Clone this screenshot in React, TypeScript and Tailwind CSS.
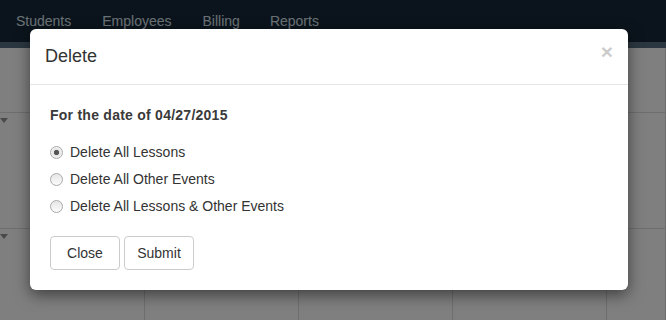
const navItems = ["Students", "Employees", "Billing", "Reports"];
const columns = [145, 154, 154, 154, 59];

const Caret = () => (
  <span className="block w-0 h-0 border-l-[4px] border-r-[4px] border-t-[5px] border-l-transparent border-r-transparent border-t-[#939393]" />
);

export default function App() {
  return (
    <div
      className="relative w-[666px] h-[320px] overflow-hidden bg-white"
      style={{ fontFamily: '"Liberation Sans", Arial, sans-serif' }}
    >
      {/* page behind the dialog */}
      <nav className="h-[42px] bg-[#172838] flex items-center pl-4 gap-[30px] text-[14px] text-[#d6e3ea]">
        <span>Students</span>
        <span className="ml-[1px]">Employees</span>
        <span className="ml-[1px]">Billing</span>
        <span>Reports</span>
      </nav>
      <div className="h-[6px] bg-[#566e80]" />
      <div className="flex">
        {columns.map((w, i) => (
          <div
            key={i}
            className="shrink-0 border-r border-[#dddddd]"
            style={{ width: w }}
          >
            <div className="h-[65px] border-b border-[#dddddd]" />
            <div className="h-[116px] border-b border-[#dddddd] pt-[5px]">
              {i === 0 && <Caret />}
            </div>
            <div className="h-[116px] pt-[5px]">{i === 0 && <Caret />}</div>
          </div>
        ))}
      </div>

      {/* overlay */}
      <div className="absolute inset-0 bg-black/50" />

      {/* dialog */}
      <div className="absolute left-[30px] top-[29px] w-[598px] bg-white rounded-[6px] shadow-[0_5px_15px_rgba(0,0,0,0.5)] text-[#333333]">
        <div className="h-[56px] border-b border-[#e5e5e5] flex items-center justify-between pl-[15px] pr-[15px]">
          <h4 className="text-[18px] leading-[26px] -mt-[2px]">Delete</h4>
          <button className="text-[21px] font-bold leading-none text-black opacity-20 -mt-[10px]">
            ×
          </button>
        </div>
        <div className="px-5 pt-5 pb-5">
          <p className="text-[14px] font-bold leading-5 text-[#3a3a3a] tracking-[0.25px]">
            For the date of 04/27/2015
          </p>
          <div className="mt-[17px] flex flex-col gap-[7px]">
            {[
              "Delete All Lessons",
              "Delete All Other Events",
              "Delete All Lessons & Other Events",
            ].map((label, i) => (
              <label key={label} className="flex items-center h-5 text-[14px]">
                <input
                  type="radio"
                  name="del"
                  defaultChecked={i === 0}
                  className="appearance-none w-[13px] h-[13px] m-0 mr-[7px] rounded-full border border-[#a9a9a9] bg-[linear-gradient(#e6e6e6,#fbfbfb)] checked:bg-[radial-gradient(circle,#555_0,#555_2.2px,#e4e4e4_3px,#f6f6f6_6px)]"
                />
                {label}
              </label>
            ))}
          </div>
          <div className="mt-5 flex gap-[4px]">
            <button className="w-[70px] h-[34px] border border-[#cccccc] rounded-[4px] text-[14px] bg-white">
              Close
            </button>
            <button className="w-[70px] h-[34px] border border-[#cccccc] rounded-[4px] text-[14px] bg-white">
              Submit
            </button>
          </div>
        </div>
      </div>
    </div>
  );
}
